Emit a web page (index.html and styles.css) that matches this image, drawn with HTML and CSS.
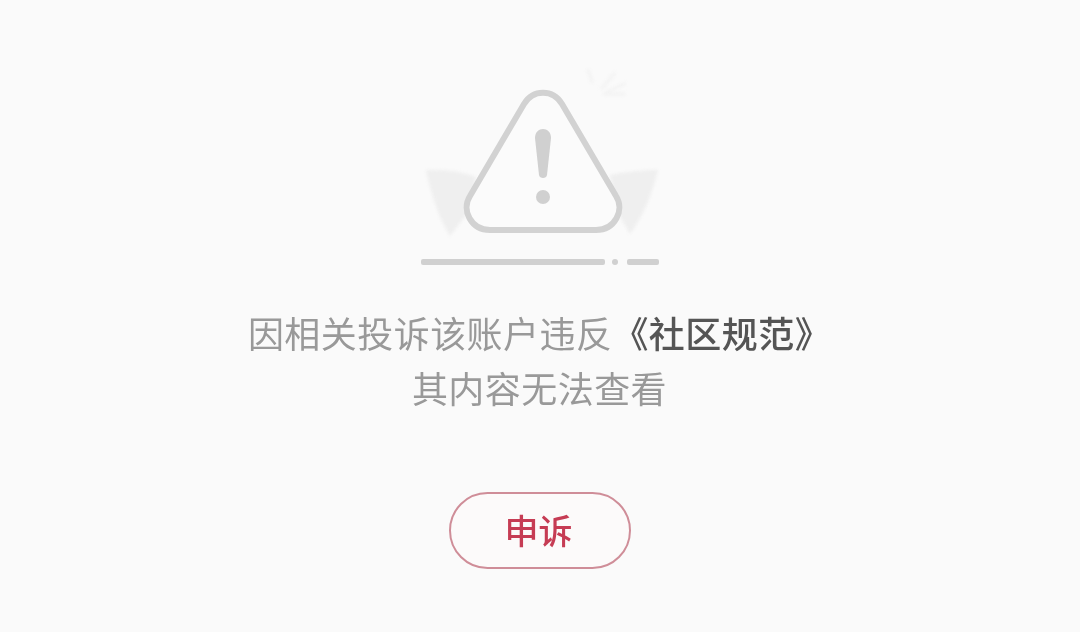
FILE: index.html
```html
<!DOCTYPE html>
<html lang="zh-CN">
  <head>
    <meta charset="UTF-8" />
    <title>申诉</title>
    <link rel="stylesheet" href="styles.css">
  </head>
  <body>
    <main class="notice">
      <svg class="notice-icon" width="260" height="215" viewBox="0 0 260 215" aria-hidden="true">
        <g class="soft">
          <path class="wing" d="M16 110 Q42 108 66 117 L60 150 L40 176 Q24 150 16 110 Z" />
          <path class="wing" d="M248 110 Q224 110 200 115 L206 150 L220 174 Q238 150 248 110 Z" />
          <path class="spark" d="M178 10 L182 22 M192 28 L204 14 M197 32 L214 24 M194 34 L214 34" />
        </g>
        <path class="triangle" d="M80 170 H186 C205 170 215 150 206 136 L152 44 C143 29 123 29 114 44 L60 136 C51 150 61 170 80 170 Z" />
        <path class="mark" d="M125 78 C125 66 141 66 141 78 L137 115 C136.500 119 129.500 119 129 115 Z" />
        <circle class="mark" cx="133" cy="137" r="7" />
        <rect class="rule" x="11" y="199" width="184" height="6" rx="2" />
        <circle class="rule" cx="205" cy="202" r="3" />
        <rect class="rule" x="217" y="199" width="32" height="6" rx="2" />
      </svg>

      <p class="notice-text">
        因相关投诉该账户违反<strong>《社区规范》</strong><br />其内容无法查看
      </p>

      <button class="appeal" type="button">申诉</button>
    </main>
  </body>
</html>
```

FILE: styles.css
```css
html,
body {
  height: 100%;
}
body {
  margin: 0;
  background: #fafafa;
  font-family: "Noto Sans CJK SC", "Noto Sans", sans-serif;
  overflow: hidden;
}
.notice {
  display: flex;
  flex-direction: column;
  align-items: center;
  padding-top: 60px;
  filter: blur(0.5px);
}
.notice-icon {
  display: block;
}
.soft {
  filter: blur(1.5px);
}
.wing {
  fill: #efefef;
}
.spark {
  fill: none;
  stroke: #f3f3f3;
  stroke-width: 3;
  stroke-linecap: round;
}
.triangle {
  fill: #fbfbfb;
  stroke: #d2d2d2;
  stroke-width: 6;
}
.mark,
.rule {
  fill: #d0d0d0;
}
.notice-text {
  margin: 30px 0 0 -1px;
  font-size: 36px;
  letter-spacing: 0.45px;
  line-height: 55px;
  text-align: center;
  color: #999;
}
.notice-text strong {
  font-weight: 500;
  color: #555;
}
.appeal {
  box-sizing: border-box;
  width: 182px;
  height: 77px;
  margin-top: 77px;
  padding: 0 3px 2px 0;
  background: #fcfafa;
  border: 2px solid #cf8d98;
  border-radius: 39px;
  font-family: inherit;
  font-size: 34px;
  font-weight: 500;
  color: #c63c54;
  cursor: pointer;
}
```
